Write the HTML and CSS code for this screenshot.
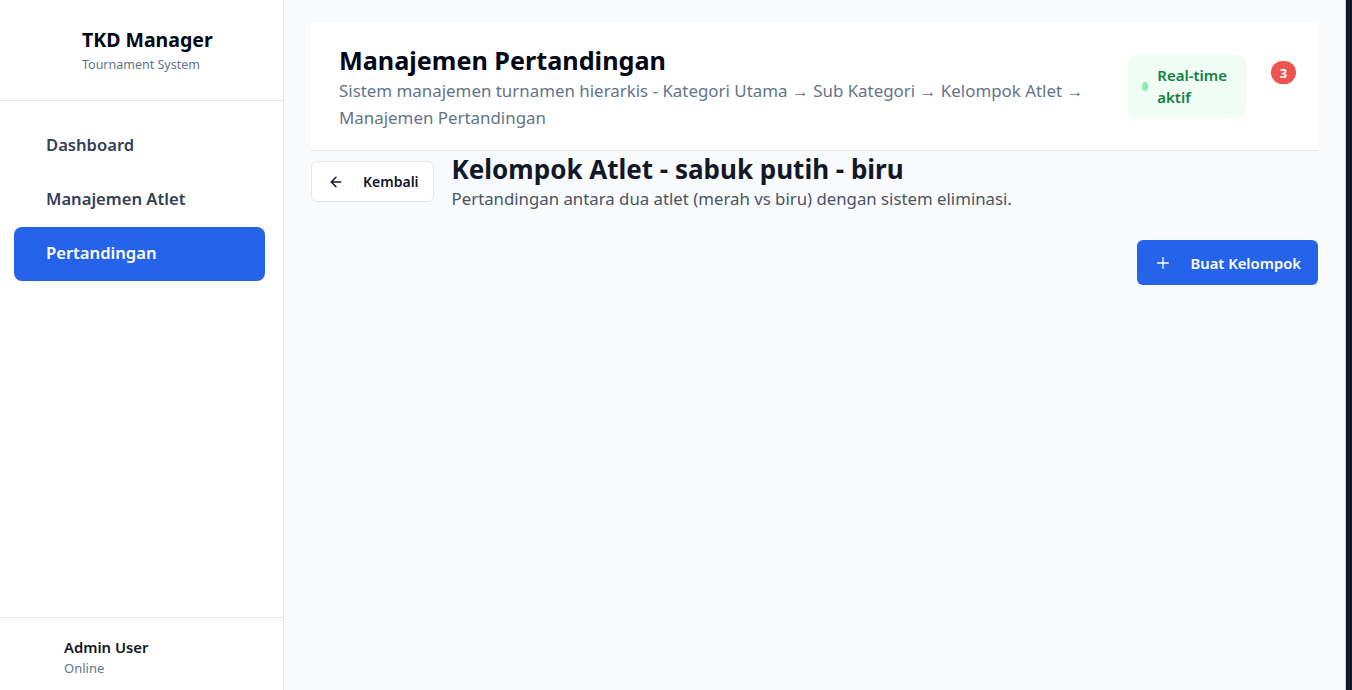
FILE: index.html
```html
<!DOCTYPE html>
<html lang="id">
<head>
<meta charset="utf-8">
<title>TKD Manager</title>
<link rel="stylesheet" href="styles.css">
</head>
<body>
<div class="app">
  <aside class="sidebar">
    <div class="brand">
      <div class="brand-name">TKD Manager</div>
      <div class="brand-sub">Tournament System</div>
    </div>
    <nav class="nav">
      <a class="nav-item">Dashboard</a>
      <a class="nav-item">Manajemen Atlet</a>
      <a class="nav-item active">Pertandingan</a>
    </nav>
    <div class="user">
      <div class="user-name">Admin User</div>
      <div class="user-status">Online</div>
    </div>
  </aside>
  <main class="main">
    <header class="page-header">
      <div class="header-text">
        <h1 class="page-title">Manajemen Pertandingan</h1>
        <p class="page-sub">Sistem manajemen turnamen hierarkis - Kategori Utama → Sub Kategori → Kelompok Atlet → Manajemen Pertandingan</p>
      </div>
      <div class="header-right">
        <div class="live-badge"><span class="live-dot"></span><span>Real-time<br>aktif</span></div>
        <div class="notif">3</div>
      </div>
    </header>
    <section class="section-head">
      <button class="back-btn">
        <svg width="16" height="16" viewBox="0 0 24 24" fill="none" stroke="#111827" stroke-width="2.2" stroke-linecap="round" stroke-linejoin="round"><path d="M19 12H5"/><path d="M12 19l-7-7 7-7"/></svg>
        <span>Kembali</span>
      </button>
      <div class="section-text">
        <h2 class="section-title">Kelompok Atlet - sabuk putih - biru</h2>
        <p class="section-sub">Pertandingan antara dua atlet (merah vs biru) dengan sistem eliminasi.</p>
      </div>
    </section>
    <div class="actions">
      <button class="primary-btn">
        <svg width="16" height="16" viewBox="0 0 24 24" fill="none" stroke="#ffffff" stroke-width="2" stroke-linecap="round"><path d="M12 4v16"/><path d="M4 12h16"/></svg>
        <span>Buat Kelompok</span>
      </button>
    </div>
  </main>
  <div class="edge"></div>
</div>
</body>
</html>
```
FILE: styles.css
```css
* { box-sizing: border-box; }
html, body { margin: 0; padding: 0; height: 100%; }
body {
  font-family: "Noto Sans", "Open Sans", sans-serif;
  background: #f8fafc;
  color: #111827;
}
.app {
  display: flex;
  height: 690px;
  overflow: hidden;
}
.sidebar {
  width: 284px;
  flex: none;
  background: #ffffff;
  border-right: 1px solid #e5e7eb;
  box-shadow: 2px 0 6px rgba(15, 23, 42, 0.04);
  display: flex;
  flex-direction: column;
}
.brand {
  height: 101px;
  border-bottom: 1px solid #e2e8f0;
  padding: 27px 0 0 82px;
}
.brand-name {
  font-size: 19.5px;
  font-weight: 700;
  color: #020617;
  line-height: 26px;
}
.brand-sub {
  font-size: 12.5px;
  color: #64748b;
  line-height: 18px;
  margin-top: 3px;
}
.nav {
  flex: 1;
  padding: 18px 18px 0 14px;
  display: flex;
  flex-direction: column;
}
.nav-item {
  display: flex;
  align-items: center;
  height: 54px;
  padding: 0 0 4px 32px;
  font-size: 16.6px;
  font-weight: 600;
  color: #334155;
  border-radius: 8px;
}
.nav-item.active {
  background: #2563eb;
  color: #ffffff;
}
.user {
  border-top: 1px solid #e5e7eb;
  height: 73px;
  padding: 18px 0 0 64px;
}
.user-name {
  font-size: 14.8px;
  font-weight: 600;
  color: #0f172a;
  line-height: 22px;
}
.user-status {
  font-size: 13px;
  color: #64748b;
  line-height: 20px;
}
.main {
  flex: 1;
  padding: 23px 27px 0 27px;
  display: flex;
  flex-direction: column;
  background: #f8fafc;
}
.page-header {
  background: #ffffff;
  border-bottom: 1px solid #e5e7eb;
  display: flex;
  justify-content: space-between;
  align-items: flex-start;
  padding: 20px 22px 19px 28px;
}
.header-text { max-width: 760px; }
.page-title {
  margin: 0;
  font-size: 25.2px;
  font-weight: 700;
  line-height: 34px;
  color: #020617;
}
.page-sub {
  margin: 0;
  font-size: 16.9px;
  line-height: 27px;
  color: #64748b;
}
.header-right {
  display: flex;
  align-items: flex-start;
  gap: 25px;
  padding-top: 12px;
}
.live-badge {
  display: flex;
  align-items: center;
  gap: 9px;
  background: #f0fdf4;
  color: #15803d;
  font-size: 15px;
  font-weight: 600;
  line-height: 22px;
  padding: 9px 19px 10px 14px;
  border-radius: 8px;
}
.live-dot {
  width: 6px;
  height: 9px;
  border-radius: 50%;
  background: #86efac;
}
.notif {
  margin-top: 6px;
  width: 25px;
  height: 23px;
  border-radius: 12px;
  background: #ef5350;
  color: #ffffff;
  font-size: 13px;
  font-weight: 700;
  display: flex;
  align-items: center;
  justify-content: center;
}
.section-head {
  display: flex;
  align-items: flex-start;
  gap: 18px;
  margin-top: 3px;
}
.back-btn {
  margin-top: 7px;
  display: flex;
  align-items: center;
  gap: 19px;
  height: 41px;
  padding: 0 14px 0 16px;
  background: #ffffff;
  border: 1px solid #e5e7eb;
  border-radius: 6px;
  font-family: inherit;
  font-size: 14px;
  font-weight: 600;
  color: #0f172a;
}
.section-title {
  margin: 0;
  font-size: 26px;
  font-weight: 700;
  line-height: 30px;
  color: #111827;
}
.section-sub {
  margin: 0;
  font-size: 16.8px;
  line-height: 30px;
  color: #4b5563;
}
.actions {
  display: flex;
  justify-content: flex-end;
  margin-top: 26px;
}
.primary-btn {
  display: flex;
  align-items: center;
  gap: 19px;
  height: 45px;
  padding: 0 17px 0 18px;
  background: #2563eb;
  border: none;
  border-radius: 6px;
  font-family: inherit;
  font-size: 14.8px;
  font-weight: 600;
  color: #ffffff;
}
.edge {
  width: 7px;
  flex: none;
  background: #0f172a;
  border-left: 1px solid #cbd5e1;
}
```
